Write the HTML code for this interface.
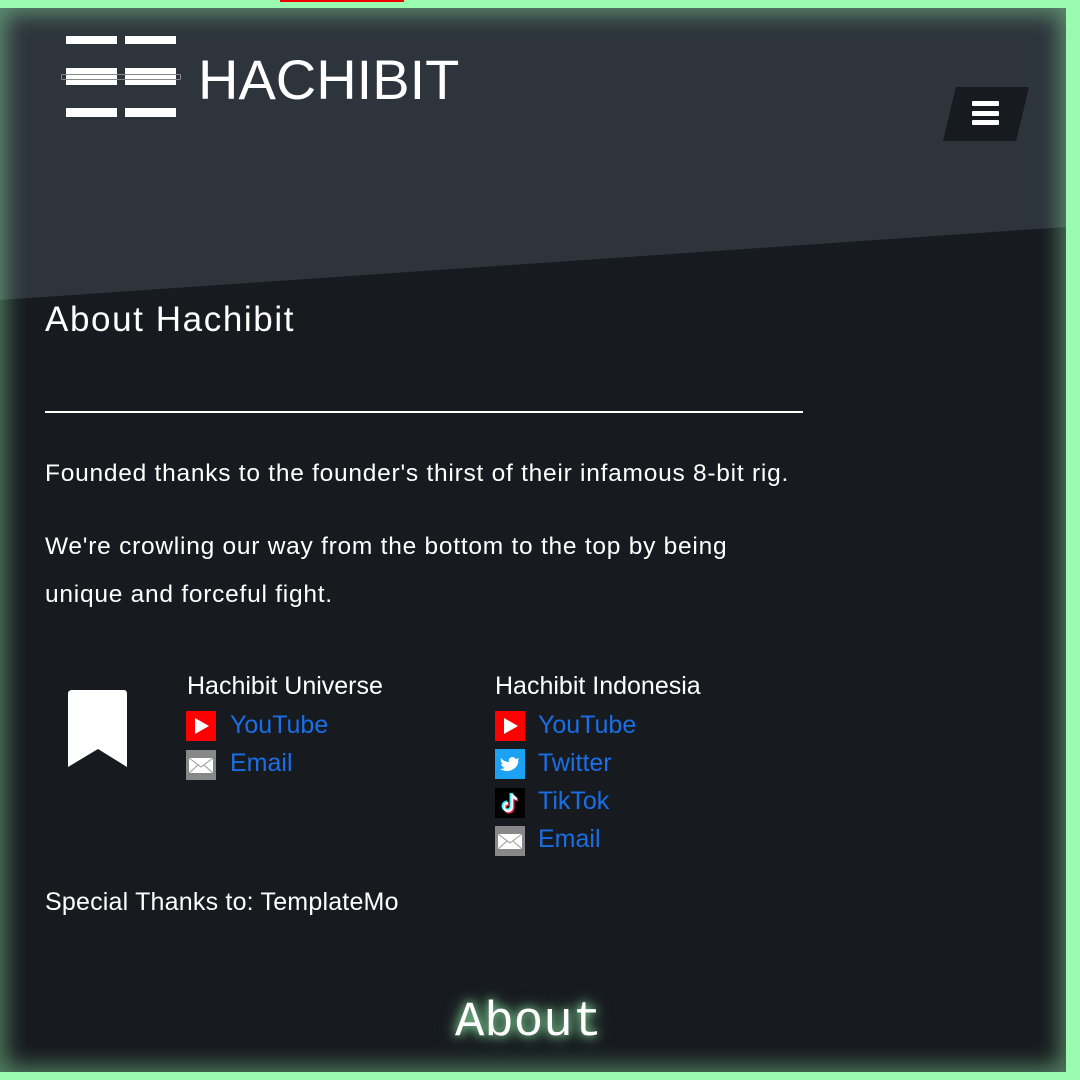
<!DOCTYPE html>
<html><head><meta charset="utf-8"><style>
*{margin:0;padding:0;box-sizing:border-box}
html,body{width:1080px;height:1080px;overflow:hidden;background:#9afbb0;font-family:"Liberation Sans",sans-serif}
#red{position:absolute;left:280px;top:0;width:124px;height:2px;background:#e00}
#panel{position:absolute;left:0;top:8px;width:1066px;height:1064px;background:#171a1f;overflow:hidden}
#hdr{position:absolute;left:0;top:0;width:1066px;height:300px;background:#2d343c;clip-path:polygon(0 0,100% 0,100% 219px,0 292px)}
#glow{position:absolute;left:0;top:0;width:1066px;height:1064px;box-shadow:inset 0 0 22px 6px rgba(154,251,176,.45);pointer-events:none}
.t{position:absolute;color:#fff;white-space:nowrap;font-weight:300}
.bar{position:absolute;background:#fff;height:8px;width:51px}
.lk{position:absolute;color:#1a6ee6;font-size:25px;white-space:nowrap}
.ic{position:absolute;width:30px;height:30px}
.p{font-size:24.5px;letter-spacing:0.75px}
</style></head><body>
<div id="red"></div>
<div id="panel">
<div id="hdr"></div>
<div class="bar" style="left:66px;top:28px"></div><div class="bar" style="left:125px;top:28px"></div>
<div class="bar" style="left:66px;top:60px;height:17px"></div><div class="bar" style="left:125px;top:60px;height:17px"></div>
<div class="bar" style="left:66px;top:100px;height:9px"></div><div class="bar" style="left:125px;top:100px;height:9px"></div>
<div style="position:absolute;left:61px;top:66px;width:120px;height:6px;border:1px solid #888;border-radius:1px"></div>
<div class="t" style="left:198px;top:39px;font-size:56px">HACHIBIT</div>
<div style="position:absolute;left:943px;top:79px;width:86px;height:54px;background:#171a1f;clip-path:polygon(15% 0,100% 0,85% 100%,0 100%)"></div>
<div style="position:absolute;left:972px;top:93px;width:27px;height:5px;background:#fff;border-radius:1px"></div>
<div style="position:absolute;left:972px;top:103px;width:27px;height:5px;background:#fff;border-radius:1px"></div>
<div style="position:absolute;left:972px;top:112px;width:27px;height:5px;background:#fff;border-radius:1px"></div>
<div class="t" style="left:45px;top:292px;font-size:35px;font-weight:400;letter-spacing:1.6px">About Hachibit</div>
<div style="position:absolute;left:45px;top:403px;width:758px;height:2px;background:#fff"></div>
<div class="t p" style="left:45px;top:452px">Founded thanks to the founder's thirst of their infamous 8-bit rig.</div>
<div class="t p" style="left:45px;top:525px">We're crowling our way from the bottom to the top by being</div>
<div class="t p" style="left:45px;top:573px">unique and forceful fight.</div>
<svg style="position:absolute;left:68px;top:682px" width="60" height="78"><path d="M4 0H56Q59 0 59 4V77L30 59L0 77V4Q0 0 4 0Z" fill="#fff"/></svg>
<div class="t" style="left:187px;top:664px;font-size:25px">Hachibit Universe</div>
<div class="t" style="left:495px;top:664px;font-size:25px">Hachibit Indonesia</div>
<svg class="ic" style="left:186px;top:703px"><rect width="30" height="30" fill="#f00"/><path d="M9 7L23 15L9 23Z" fill="#fff"/></svg>
<div class="lk" style="left:230px;top:703px">YouTube</div>
<svg class="ic" style="left:186px;top:742px"><rect width="30" height="30" fill="#888"/><rect x="3" y="8" width="24" height="15" fill="#fff"/><path d="M3 8L15 17L27 8M3 23L12 15M27 23L18 15" stroke="#999" fill="none"/></svg>
<div class="lk" style="left:230px;top:741px">Email</div>
<svg class="ic" style="left:495px;top:703px"><rect width="30" height="30" fill="#f00"/><path d="M9 7L23 15L9 23Z" fill="#fff"/></svg>
<div class="lk" style="left:538px;top:703px">YouTube</div>
<svg class="ic" style="left:495px;top:741px"><rect width="30" height="30" fill="#1da1f2"/><path d="M24 9Q22 10 21 10Q19 8 17 8Q13 9 14 13Q9 13 6 9Q5 13 8 15Q7 15 6 15Q7 18 10 19Q8 20 5 20Q14 25 21 18Q24 14 23 11Q24 10 24 9Z" fill="#fff"/></svg>
<div class="lk" style="left:538px;top:741px">Twitter</div>
<svg class="ic" style="left:495px;top:780px"><rect width="30" height="30" fill="#000"/><path d="M17 6V19A4 4 0 1 1 13 15M17 6Q18 10 22 11" stroke="#fe2c55" stroke-width="3" fill="none" transform="translate(1 1)"/><path d="M17 6V19A4 4 0 1 1 13 15M17 6Q18 10 22 11" stroke="#25f4ee" stroke-width="3" fill="none" transform="translate(-1 -1)"/><path d="M17 6V19A4 4 0 1 1 13 15M17 6Q18 10 22 11" stroke="#fff" stroke-width="2.4" fill="none"/></svg>
<div class="lk" style="left:538px;top:779px">TikTok</div>
<svg class="ic" style="left:495px;top:818px"><rect width="30" height="30" fill="#888"/><rect x="3" y="8" width="24" height="15" fill="#fff"/><path d="M3 8L15 17L27 8M3 23L12 15M27 23L18 15" stroke="#999" fill="none"/></svg>
<div class="lk" style="left:538px;top:817px">Email</div>
<div class="t" style="left:45px;top:880px;font-size:25px;letter-spacing:0.2px">Special Thanks to: TemplateMo</div>
<div class="t" style="left:455px;top:986px;font-size:49px;font-family:'Liberation Mono',monospace;font-weight:400;text-shadow:0 0 10px #9afbb0,0 0 18px rgba(154,251,176,.6)">About</div>
<div id="glow"></div>
</div>
</body></html>
